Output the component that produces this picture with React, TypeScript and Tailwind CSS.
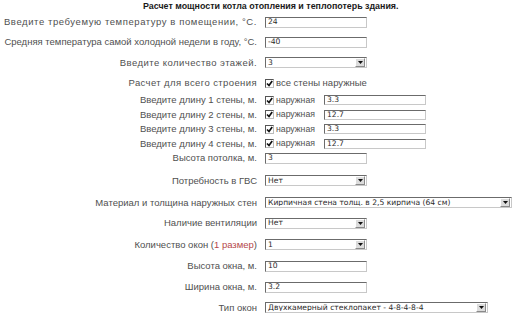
import React from "react";

const labelCls =
  "w-[257px] shrink-0 text-right text-[9.5px] leading-none text-[#505050] whitespace-nowrap";
const ctrlFont = { fontFamily: '"DejaVu Sans", Verdana, sans-serif' };

function TextBox({ value, w = "w-[102px]", h = "h-[11px]" }: { value: string; w?: string; h?: string }) {
  return (
    <div
      className={`${w} ${h} border border-t-[#6b6b6b] border-l-[#6b6b6b] border-b-[#c8c8c8] border-r-[#c8c8c8] bg-white flex items-center pl-[2px] text-[7.6px] leading-none text-[#2a2a2a]`}
      style={ctrlFont}
    >
      {value}
    </div>
  );
}

function Select({ value, w = "w-[102px]" }: { value: string; w?: string }) {
  return (
    <div
      className={`${w} h-[11px] border border-t-[#6b6b6b] border-l-[#6b6b6b] border-b-[#c8c8c8] border-r-[#c8c8c8] bg-white flex items-center`}
      style={ctrlFont}
    >
      <span className="flex-1 pl-[2px] text-[7.6px] leading-none text-[#2a2a2a] whitespace-nowrap overflow-hidden">
        {value}
      </span>
      <span className="w-[10px] h-[9px] mr-[1px] bg-[#dcdcdc] border-t border-l border-t-white border-l-white border-b border-r border-b-[#8a8a8a] border-r-[#8a8a8a] flex items-center justify-center">
        <svg width="5" height="3" viewBox="0 0 5 3">
          <polygon points="0,0 5,0 2.5,3" fill="#111" />
        </svg>
      </span>
    </div>
  );
}

function Check() {
  return (
    <span className="w-[9px] h-[9px] shrink-0 border border-t-[#555] border-l-[#555] border-b-[#bbb] border-r-[#bbb] bg-white flex items-center justify-center">
      <svg width="7" height="7" viewBox="0 0 7 7">
        <path d="M1 3.5 L3 5.5 L6.2 1" stroke="#111" strokeWidth="1.7" fill="none" />
      </svg>
    </span>
  );
}

function Row({
  h,
  label,
  track = "",
  children,
}: {
  h: string;
  label: React.ReactNode;
  track?: string;
  children: React.ReactNode;
}) {
  return (
    <div className={`flex items-center ${h}`}>
      <div className={`${labelCls} ${track}`}>{label}</div>
      <div className="ml-[8px] flex items-center">{children}</div>
    </div>
  );
}

function WallRow({ h, n, value }: { h: string; n: number; value: string }) {
  return (
    <Row h={h} label={`Введите длину ${n} стены, м.`}>
      <Check />
      <span className="ml-[2px] w-[48px] text-[8.7px] leading-none text-[#505050]">наружная</span>
      <TextBox value={value} h="h-[10px]" />
    </Row>
  );
}

export default function App() {
  return (
    <div
      className="w-[520px] h-[322px] bg-white overflow-hidden"
      style={{ fontFamily: '"Liberation Sans", Arial, sans-serif' }}
    >
      <div className="h-[12px] flex items-center pl-[143px]">
        <span className="text-[8.9px] font-bold leading-none text-[#1a1a1a] whitespace-nowrap">
          Расчет мощности котла отопления и теплопотерь здания.
        </span>
      </div>
      <Row h="h-[20px]" track="tracking-[0.58px]" label="Введите требуемую температуру в помещении, °С.">
        <TextBox value="24" />
      </Row>
      <Row h="h-[20px]" label="Средняя температура самой холодной недели в году, °С.">
        <TextBox value="-40" />
      </Row>
      <Row h="h-[21px]" track="tracking-[0.45px]" label="Введите количество этажей.">
        <Select value="3" />
      </Row>
      <Row h="h-[20px]" track="tracking-[0.4px]" label="Расчет для всего строения">
        <Check />
        <span className="ml-[2px] text-[9.5px] leading-none text-[#505050] whitespace-nowrap">все стены наружные</span>
      </Row>
      <WallRow h="h-[14px]" n={1} value="3.3" />
      <WallRow h="h-[15px]" n={2} value="12.7" />
      <WallRow h="h-[14px]" n={3} value="3.3" />
      <WallRow h="h-[15px]" n={4} value="12.7" />
      <Row h="h-[14px]" label="Высота потолка, м.">
        <TextBox value="3" />
      </Row>
      <Row h="h-[31px]" label="Потребность в ГВС">
        <Select value="Нет" />
      </Row>
      <Row h="h-[13px]" label="Материал и толщина наружных стен">
        <Select value="Кирпичная стена толщ. в 2,5 кирпича (64 см)" w="w-[247px]" />
      </Row>
      <Row h="h-[28px]" label="Наличие вентиляции">
        <Select value="Нет" />
      </Row>
      <Row
        h="h-[15px]"
        label={
          <>
            Количество окон (<span className="text-[#b5484a]">1 размер</span>)
          </>
        }
      >
        <Select value="1" />
      </Row>
      <Row h="h-[28px]" label="Высота окна, м.">
        <TextBox value="10" />
      </Row>
      <Row h="h-[14px]" label="Ширина окна, м.">
        <TextBox value="3.2" />
      </Row>
      <Row h="h-[27px]" label="Тип окон">
        <Select value="Двухкамерный стеклопакет - 4-8-4-8-4" w="w-[223px]" />
      </Row>
    </div>
  );
}
